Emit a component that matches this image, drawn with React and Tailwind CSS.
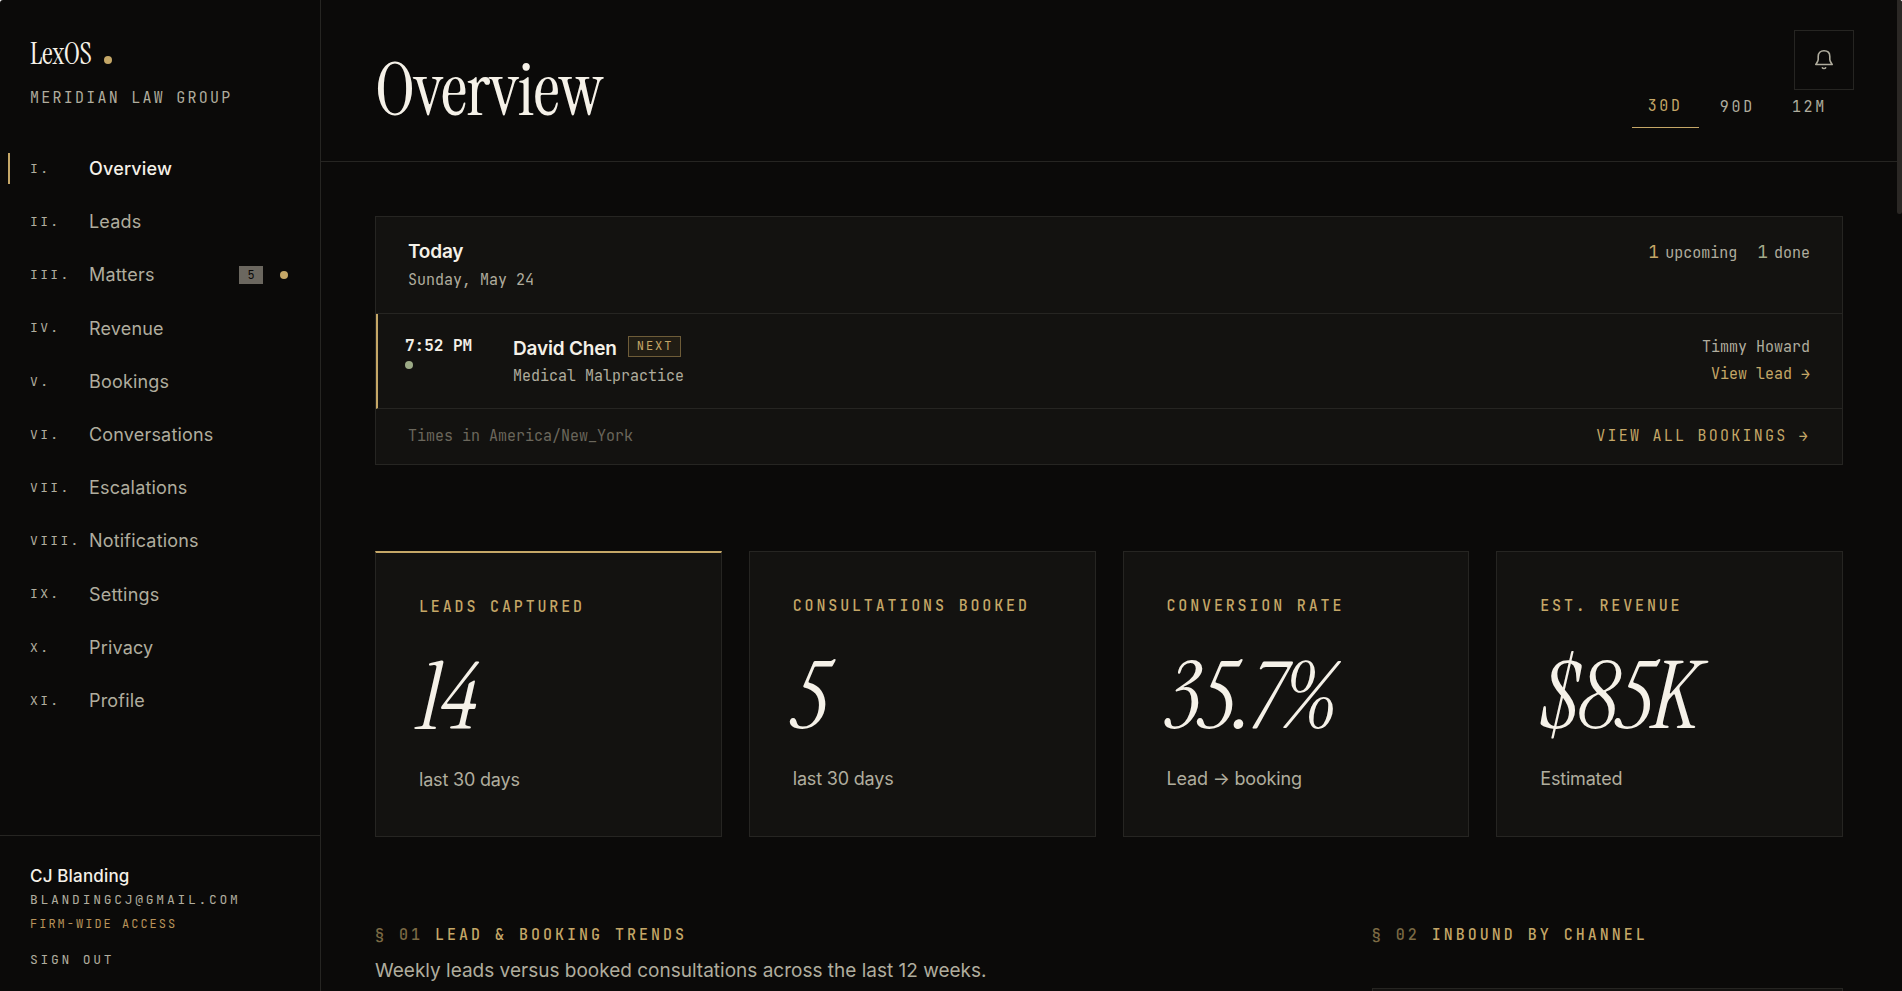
import React, { useState } from "react";

const mono = "font-['JetBrains_Mono','DejaVu_Sans_Mono',monospace]";
const serif = "font-['Instrument_Serif','Liberation_Serif',serif]";

const navItems = [
  { numeral: "I.", label: "Overview" },
  { numeral: "II.", label: "Leads" },
  { numeral: "III.", label: "Matters", count: 5, dot: true },
  { numeral: "IV.", label: "Revenue" },
  { numeral: "V.", label: "Bookings" },
  { numeral: "VI.", label: "Conversations" },
  { numeral: "VII.", label: "Escalations" },
  { numeral: "VIII.", label: "Notifications" },
  { numeral: "IX.", label: "Settings" },
  { numeral: "X.", label: "Privacy" },
  { numeral: "XI.", label: "Profile" },
];

const stats = [
  { label: "LEADS CAPTURED", value: "14", note: "last 30 days" },
  { label: "CONSULTATIONS BOOKED", value: "5", note: "last 30 days" },
  { label: "CONVERSION RATE", value: "35.7%", note: "Lead → booking" },
  { label: "EST. REVENUE", value: "$85K", note: "Estimated" },
];

const ranges = ["30D", "90D", "12M"];

const BellIcon = () => (
  <svg width="20" height="22" viewBox="0 0 20 22" fill="none" stroke="currentColor" strokeWidth="1.6" strokeLinecap="round" strokeLinejoin="round" aria-hidden="true">
    <path d="M4.2 10.5V7.4C4.2 3.9 6.4 1.8 10 1.8s5.8 2.1 5.8 5.6v3.1c0 1.6 1.2 2.9 2.4 5H1.8c1.2-2.1 2.4-3.4 2.4-5z" />
    <path d="M8.4 18.8c.5.9 2.7.9 3.2 0" />
  </svg>
);

const NavItem = ({ item, active }) => (
  <li className="flex-1 flex">
    <a
      href={`#${item.label.toLowerCase()}`}
      aria-current={active ? "page" : undefined}
      className="relative flex-1 flex items-center pl-[30px] pr-8"
    >
      {active && <span className="absolute left-2 h-[31px] w-0.5 bg-[#c5a767]" />}
      <span className={`${mono} w-[59px] text-[13px] tracking-[0.18em] text-[#b0ad9e]`}>
        {item.numeral}
      </span>
      <span
        className={`flex-1 text-[18px] tracking-[0.01em] ${
          active ? "text-[#f5f1e8] font-medium" : "text-[#b0ad9e]"
        }`}
      >
        {item.label}
      </span>
      {item.count && (
        <span className={`${mono} bg-[#6b675f] text-[#0b0a09] text-xs leading-[18px] w-6 text-center`}>
          {item.count}
        </span>
      )}
      {item.dot && <span className="ml-[17px] size-2 rounded-full bg-[#c5a767]" />}
    </a>
  </li>
);

const Sidebar = () => (
  <aside className="w-[321px] shrink-0 flex flex-col border-r border-[#262522]">
    <div className="px-[30px] pt-9">
      <div className="flex items-baseline gap-3">
        <span className={`${serif} text-[30px] leading-9 tracking-[-0.01em] text-[#f5f1e8]`}>LexOS</span>
        <span className="size-2 rounded-full bg-[#c5a767]" />
      </div>
      <p className={`${mono} mt-3 text-[15px] leading-7 tracking-[0.15em] text-[#b0ad9e]`}>
        MERIDIAN LAW GROUP
      </p>
    </div>
    <nav className="flex-1 flex pt-[30px] pb-[108px]">
      <ul className="flex-1 flex flex-col">
        {navItems.map((item, index) => (
          <NavItem key={item.label} item={item} active={index === 0} />
        ))}
      </ul>
    </nav>
    <div className="border-t border-[#262522] px-[30px] pt-7 pb-[19px]">
      <p className="text-[17px] leading-6 tracking-[0.01em] font-medium text-[#f5f1e8]">CJ Blanding</p>
      <p className={`${mono} text-[13px] leading-6 tracking-[0.21em] text-[#b0ad9e]`}>BLANDINGCJ@GMAIL.COM</p>
      <p className={`${mono} text-xs leading-6 tracking-[2px] text-[#b8935a]`}>FIRM-WIDE ACCESS</p>
      <button type="button" className={`${mono} mt-3 text-[13px] leading-6 tracking-[0.21em] text-[#b0ad9e]`}>
        SIGN OUT
      </button>
    </div>
  </aside>
);

const TodayCard = () => (
  <section className="border border-[#262522] bg-[#131210]">
    <div className="flex justify-between px-8 pt-[21px] pb-[19px] border-b border-[#262522]">
      <div>
        <h2 className="text-[19px] leading-7 font-semibold tracking-[-0.01em] text-[#f5f1e8]">Today</h2>
        <p className={`${mono} text-[15px] leading-7 text-[#b0ad9e]`}>Sunday, May 24</p>
      </div>
      <div className={`${mono} flex items-baseline gap-5 text-[15px] leading-7 text-[#b0ad9e]`}>
        <span className="flex items-baseline gap-1.5">
          <span className="text-lg leading-7 text-[#c5a767]">1</span>upcoming
        </span>
        <span className="flex items-baseline gap-1.5">
          <span className="text-lg leading-7 text-[#a3ab8a]">1</span>done
        </span>
      </div>
    </div>
    <div className="flex border-l-2 border-l-[#c5a767] border-b border-b-[#262522] pl-[27px] pr-8 py-5">
      <div className="w-[108px]">
        <p className={`${mono} text-base leading-6 font-bold text-[#f5f1e8]`}>7:52 PM</p>
        <span className="mt-[3px] block size-2 rounded-full bg-[#9caa86]" />
      </div>
      <div className="flex-1">
        <div className="flex items-start gap-[11px]">
          <h3 className="text-[19px] leading-[30px] font-semibold tracking-[-0.01em] text-[#f5f1e8]">David Chen</h3>
          <span className={`${mono} mt-0.5 border border-[#6e5c38] bg-[#211d14] pl-2 pr-1.5 text-xs leading-[19px] tracking-[2px] text-[#c5a767]`}>
            NEXT
          </span>
        </div>
        <p className={`${mono} text-[15px] leading-6 text-[#b0ad9e]`}>Medical Malpractice</p>
      </div>
      <div className={`${mono} text-right text-[15px] leading-[27px] text-[#b0ad9e]`}>
        <p>Timmy Howard</p>
        <a href="#lead" className="text-[#c5a767]">View lead →</a>
      </div>
    </div>
    <div className={`${mono} flex justify-between px-8 py-[14px] text-[15px] leading-[27px]`}>
      <span className="text-[#6b675c]">Times in America/New_York</span>
      <a href="#bookings" className="tracking-[0.15em] text-[#c5a767]">VIEW ALL BOOKINGS →</a>
    </div>
  </section>
);

const StatCard = ({ stat, featured }) => (
  <div
    className={`bg-[#131210] border border-[#262522] px-[43px] py-10 ${
      featured ? "border-t-2 border-t-[#c5a767]" : ""
    }`}
  >
    <h3 className={`${mono} text-[15px] leading-7 font-medium tracking-[0.19em] text-[#c5a767] whitespace-nowrap`}>
      {stat.label}
    </h3>
    <p className={`${serif} mt-[29px] text-[93px] leading-[96px] italic tracking-[-0.015em] text-[#f5f1e8]`}>
      {stat.value}
    </p>
    <p className="mt-[18px] text-[18px] leading-8 tracking-[-0.01em] text-[#b0ad9e]">{stat.note}</p>
  </div>
);

const SectionTitle = ({ number, children }) => (
  <h2 className={`${mono} text-[15px] leading-7 font-medium tracking-[3px] text-[#c5a767]`}>
    <span className="text-[#7c6a44]">§ {number}</span> {children}
  </h2>
);

const App = () => {
  const [range, setRange] = useState("30D");

  return (
    <div className="h-screen flex overflow-hidden rounded-t-[3px] bg-[#0b0a09] font-['Inter','Liberation_Sans',sans-serif]">
      <Sidebar />
      <main className="relative flex-1 min-w-0 overflow-hidden">
        <header className="flex items-end justify-between border-b border-[#262522] px-[54px] pt-[51px] pb-8">
          <h1 className={`${serif} text-[74px] leading-[78px] tracking-[-0.01em] text-[#f5f1e8]`}>Overview</h1>
          <div className={`${mono} mb-px flex items-end gap-[5px] text-[15px] leading-6 tracking-[0.18em]`}>
            {ranges.map((item) => (
              <button
                key={item}
                type="button"
                onClick={() => setRange(item)}
                className={`px-4 pt-2 pb-[9px] ${
                  range === item ? "border-b border-[#c5a767] text-[#c5a767]" : "text-[#b0ad9e]"
                }`}
              >
                {item}
              </button>
            ))}
          </div>
        </header>
        <button
          type="button"
          aria-label="Notifications"
          className="absolute top-[30px] right-[43px] size-[60px] flex items-center justify-center border border-[#262522] bg-[#0b0a09] text-[#b0ad9e]"
        >
          <BellIcon />
        </button>

        <div className="px-[54px] pt-[54px]">
          <TodayCard />
          <div className="mt-[86px] grid grid-cols-4 gap-[27px]">
            {stats.map((stat, index) => (
              <StatCard key={stat.label} stat={stat} featured={index === 0} />
            ))}
          </div>
          <div className="mt-[84px] grid grid-cols-[2fr_1fr] gap-[54px]">
            <section>
              <SectionTitle number="01">LEAD &amp; BOOKING TRENDS</SectionTitle>
              <p className="mt-2 text-[19px] leading-7 text-[#b0ad9e]">
                Weekly leads versus booked consultations across the last 12 weeks.
              </p>
            </section>
            <section>
              <SectionTitle number="02">INBOUND BY CHANNEL</SectionTitle>
              <div className="mt-[39px] h-80 border border-[#262522] bg-[#131210]" />
            </section>
          </div>
        </div>
      </main>
      <div className="w-[5px] shrink-0">
        <div className="h-[214px] rounded-b-sm bg-[#2b2825]" />
      </div>
    </div>
  );
};

export default App;
